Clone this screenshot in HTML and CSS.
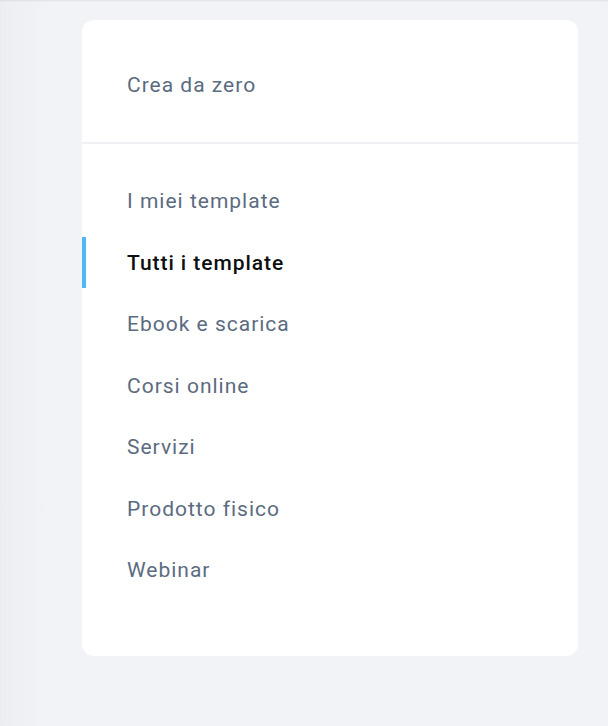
FILE: index.html
```html
<!DOCTYPE html>
<html lang="it">
<head>
<meta charset="utf-8">
<link rel="stylesheet" href="styles.css">
</head>
<body>
<div class="page">
  <nav class="card">
    <div class="section-top">
      <a class="item">Crea da zero</a>
    </div>
    <div class="section-list">
      <a class="item">I miei template</a>
      <a class="item active">Tutti i template</a>
      <a class="item">Ebook e scarica</a>
      <a class="item">Corsi online</a>
      <a class="item">Servizi</a>
      <a class="item">Prodotto fisico</a>
      <a class="item">Webinar</a>
    </div>
  </nav>
</div>
</body>
</html>
```
FILE: styles.css
```css
html, body {
  margin: 0;
  padding: 0;
}
body {
  width: 608px;
  height: 726px;
  overflow: hidden;
  font-family: Roboto, "Liberation Sans", sans-serif;
  background: linear-gradient(to right, #eceef2 0px, #f2f3f7 48px, #f2f3f7 100%);
}
.page {
  height: 726px;
  box-sizing: border-box;
  padding: 20px 30px 0 82px;
  box-shadow: inset 0 2px 2px -1px rgba(0,0,0,0.08);
}
.card {
  background: #fff;
  border-radius: 12px;
  height: 636px;
  box-sizing: border-box;
}
.section-top {
  height: 124px;
  box-sizing: border-box;
  padding-top: 39px;
  border-bottom: 2px solid #f0f1f5;
}
.section-list {
  padding-top: 31.5px;
  display: flex;
  flex-direction: column;
  gap: 10.5px;
}
.item {
  display: flex;
  align-items: center;
  height: 51px;
  padding-left: 45px;
  font-size: 21px;
  color: #5b6b80;
  letter-spacing: 1px;
  position: relative;
}
.item.active {
  color: #0d0f12;
  font-weight: 500;
  letter-spacing: 0.95px;
}
.item.active::before {
  content: "";
  position: absolute;
  left: 0;
  top: 0;
  bottom: 0;
  width: 4px;
  background: #4cb8f5;
}
```
